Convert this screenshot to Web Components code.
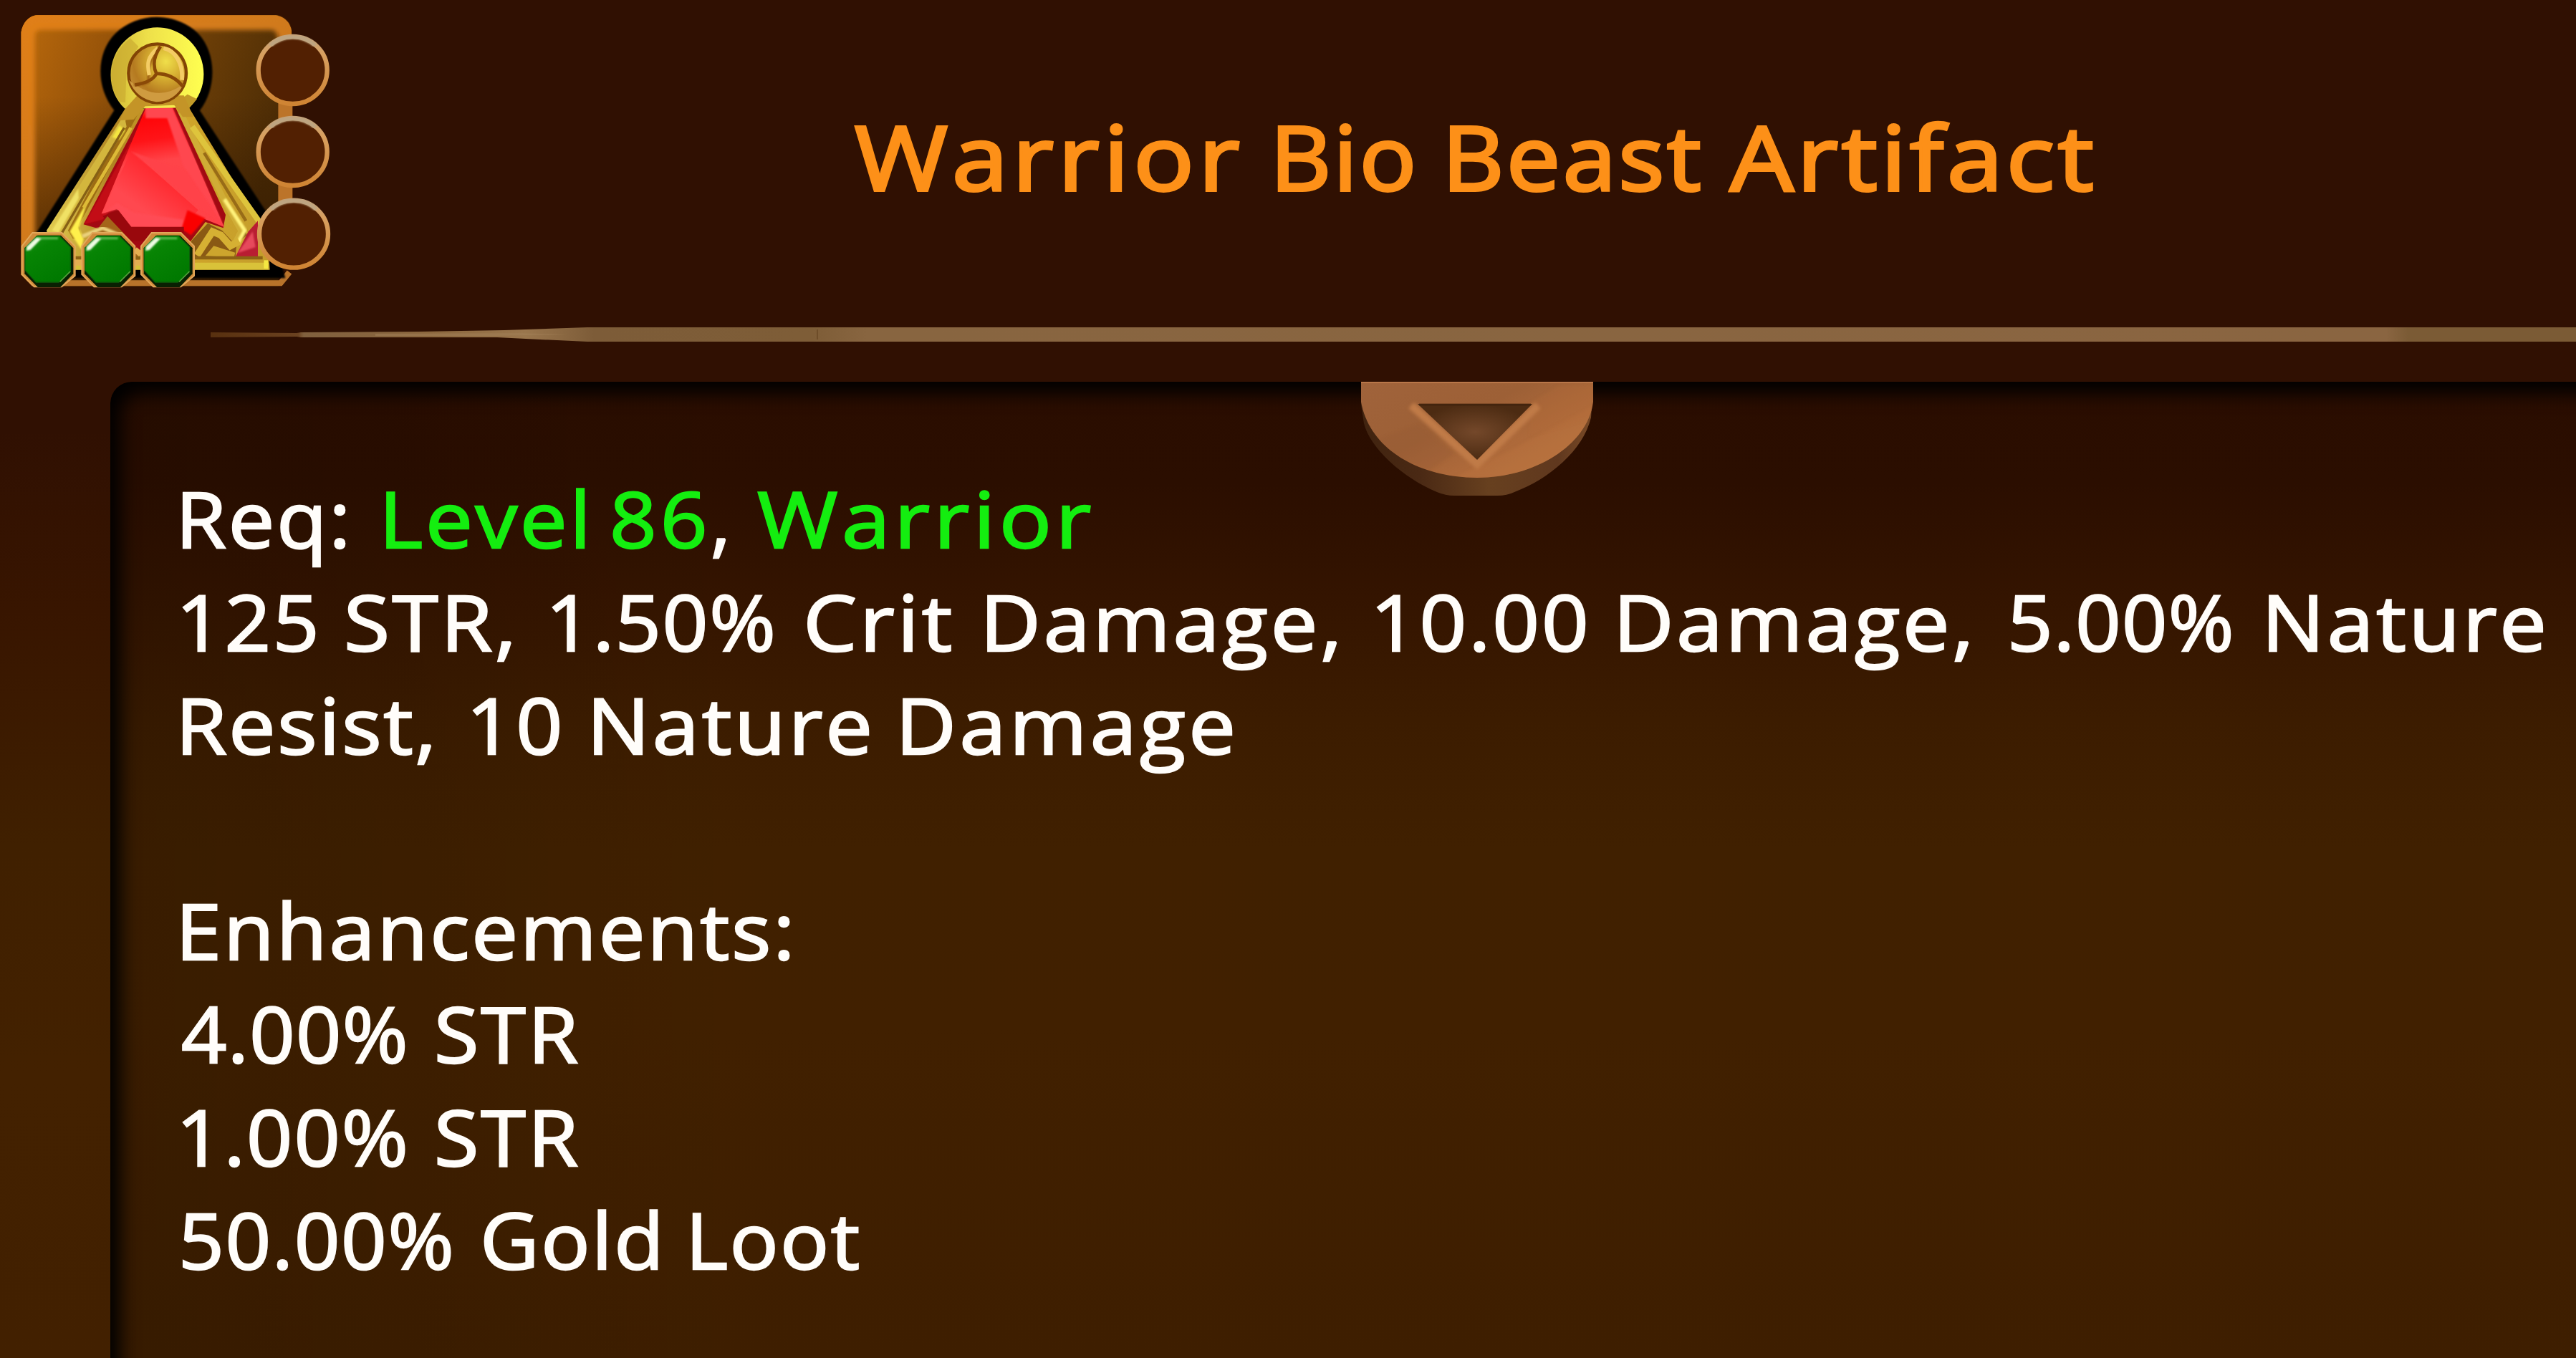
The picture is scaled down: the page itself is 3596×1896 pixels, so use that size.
<!DOCTYPE html>
<html lang="en">
<head>
<meta charset="utf-8">
<title>Warrior Bio Beast Artifact</title>
<style>
    html, body {
        margin: 0;
        width: 100%;
        height: 100%;
        overflow: hidden;
        background: #2f1002;
    }
</style>
</head>
<body>
<item-window>
    <item-header slot="header">
        <artifact-icon slot="icon"></artifact-icon>
        <fit-word ink="535" step="591">Warrior</fit-word>
        <fit-word ink="185" step="240">Bio</fit-word>
        <fit-word ink="346" step="390">Beast</fit-word>
        <fit-word ink="505" step="505">Artifact</fit-word>
    </item-header>
    <item-divider slot="header"></item-divider>
    <item-panel>
        <scroll-knob slot="knob"></scroll-knob>
        <text-line>
            <fit-word ink="226" step="284">Req:</fit-word>
            <fit-word class="met" ink="276" step="317">Level</fit-word>
            <fit-word class="met" ink="126" step="140">86</fit-word>
            <fit-word ink="16" step="62">,</fit-word>
            <fit-word class="met" ink="464" step="464">Warrior</fit-word>
        </text-line>
        <text-line>
            <fit-word ink="184" step="230">125</fit-word>
            <fit-word ink="227" step="286">STR,</fit-word>
            <fit-word ink="306" step="356">1.50%</fit-word>
            <fit-word ink="200" step="251">Crit</fit-word>
            <fit-word ink="486" step="544">Damage,</fit-word>
            <fit-word ink="290" step="340">10.00</fit-word>
            <fit-word ink="484" step="546">Damage,</fit-word>
            <fit-word ink="305" step="359">5.00%</fit-word>
            <fit-word ink="381" step="381">Nature</fit-word>
        </text-line>
        <text-line>
            <fit-word ink="345" step="405">Resist,</fit-word>
            <fit-word ink="120" step="169">10</fit-word>
            <fit-word ink="382" step="431">Nature</fit-word>
            <fit-word ink="458" step="458">Damage</fit-word>
        </text-line>
        <text-line></text-line>
        <text-line>
            <fit-word ink="846" step="846">Enhancements:</fit-word>
        </text-line>
        <text-line>
            <fit-word ink="309" step="356">4.00%</fit-word>
            <fit-word ink="194" step="194">STR</fit-word>
        </text-line>
        <text-line>
            <fit-word ink="309" step="356">1.00%</fit-word>
            <fit-word ink="194" step="194">STR</fit-word>
        </text-line>
        <text-line>
            <fit-word ink="373" step="421">50.00%</fit-word>
            <fit-word ink="241" step="291">Gold</fit-word>
            <fit-word ink="231" step="231">Loot</fit-word>
        </text-line>
    </item-panel>
</item-window>

<script>
class ShadowElement extends HTMLElement {
    constructor() {
        super();
        this.attachShadow({mode: 'open'});
        this.shadowRoot.innerHTML = this.constructor.markup;
    }
}

customElements.define('item-window', class extends ShadowElement {
    static markup = `
        <style>
            :host {
                display: flex;
                flex-direction: column;
                width: 100%;
                height: 1896px;
                overflow: hidden;
                font-family: 'Open Sans', 'Noto Sans', sans-serif;
                font-weight: 500;
                background: linear-gradient(#301002 0, #301002 600px, #381500 850px, #402000 1180px, #432100 1500px, #422000 100%);
            }
            header {
                display: flex;
                flex-direction: column;
                height: 533px;
                flex: none;
            }
        </style>
        <header><slot name="header"></slot></header>
        <slot></slot>`;
});

customElements.define('item-header', class extends ShadowElement {
    static markup = `
        <style>
            :host {
                display: grid;
                height: 457px;
                flex: none;
                color: #fd9018;
                font-size: 125px;
                line-height: 436px;
                -webkit-text-stroke: 4px #fd9018;
            }
            .icon, .title {
                grid-area: 1 / 1;
            }
            .title {
                display: flex;
                justify-content: center;
                padding-left: 518px;
            }
        </style>
        <div class="icon"><slot name="icon"></slot></div>
        <div class="title"><slot></slot></div>`;
});

customElements.define('text-line', class extends ShadowElement {
    static markup = `
        <style>
            :host {
                display: flex;
                height: 143.8px;
                flex: none;
            }
        </style>
        <slot></slot>`;
});

customElements.define('item-divider', class extends ShadowElement {
    static markup = `
        <style>
            :host {
                display: block;
                height: 20px;
                margin-left: 294px;
            }
            svg { display: block; }
        </style>
        <svg width="3302" height="20" viewBox="0 0 3302 20">
            <defs>
                <linearGradient id="bar" gradientUnits="userSpaceOnUse" x1="0" y1="0" x2="3820" y2="0">
                    <stop offset="0" stop-color="#58300f"/>
                    <stop offset=".032" stop-color="#6b4220"/>
                    <stop offset=".034" stop-color="#80603e"/>
                    <stop offset=".08" stop-color="#8c673e"/>
                    <stop offset=".115" stop-color="#9a764d"/>
                    <stop offset=".14" stop-color="#7d5c38"/>
                    <stop offset=".22" stop-color="#7e5d37"/>
                    <stop offset=".24" stop-color="#886540"/>
                    <stop offset=".795" stop-color="#8a6541"/>
                    <stop offset=".803" stop-color="#7b5b35"/>
                    <stop offset="1" stop-color="#7b5b35"/>
                </linearGradient>
            </defs>
            <path fill="url(#bar)" d="M0 7 L120 8 L126 7 L290 6 L410 4 L526 0 H3302 V20 H526 L460 17 L400 14 H126 L120 13 L0 14Z"/>
            <path fill="#a18058" d="M230 9 L430 8 L500 10 L400 12 L230 12Z" opacity=".5"/>
            <path fill="#62421f" d="M846 3 h2 v14 h-2z" opacity=".6"/>
        </svg>`;
});

customElements.define('item-panel', class extends ShadowElement {
    static markup = `
        <style>
            :host {
                display: block;
                position: relative;
                box-sizing: border-box;
                flex: 1;
                margin-left: 154px;
                padding: 119px 0 0 101px;
                border-radius: 30px 0 0 0;
                overflow: hidden;
                color: #fffdfa;
                font-size: 108px;
                line-height: 143.8px;
                -webkit-text-stroke: 2.4px currentColor;
                background: linear-gradient(#2a0d00 0, #2b0e00 140px, #341400 300px, #3c1c00 470px, #402000 650px, #412000 900px, #3e1e00 100%);
            }
            .shade {
                position: absolute;
                inset: 0 -80px -80px 0;
                border-radius: inherit;
                background: linear-gradient(90deg, rgba(0, 0, 0, 0.12), transparent 900px);
                box-shadow: inset 12px 14px 26px 2px #000;
            }
            .knob {
                position: absolute;
                top: 0;
                left: 0;
                right: 0;
                display: flex;
                justify-content: center;
                padding-left: 374px;
            }
            .text {
                position: relative;
            }
        </style>
        <div class="shade"></div>
        <div class="knob"><slot name="knob"></slot></div>
        <div class="text"><slot></slot></div>`;
});

customElements.define('scroll-knob', class extends ShadowElement {
    static markup = `
        <style>
            :host { display: block; }
            svg { display: block; }
        </style>
        <svg width="324" height="160" viewBox="0 0 324 160">
            <defs>
                <linearGradient id="face" x1="0" y1="0" x2="1" y2=".8">
                    <stop offset="0" stop-color="#a0633b"/>
                    <stop offset=".45" stop-color="#9d6036"/>
                    <stop offset=".7" stop-color="#ad693a"/>
                    <stop offset="1" stop-color="#b87340"/>
                </linearGradient>
                <linearGradient id="rim">
                    <stop offset="0" stop-color="#40230f"/>
                    <stop offset=".25" stop-color="#4a2914"/>
                    <stop offset=".55" stop-color="#67401f"/>
                    <stop offset=".85" stop-color="#60381e"/>
                    <stop offset="1" stop-color="#7b4b27"/>
                </linearGradient>
                <radialGradient id="dent">
                    <stop offset="0" stop-color="#74482a"/>
                    <stop offset="1" stop-color="#4c2b12"/>
                </radialGradient>
                <clipPath id="clip"><path d="M0 0 H324 V28 C316 90 240 134 162 134 C84 134 12 96 0 28Z"/></clipPath>
                <filter id="soft"><feGaussianBlur stdDeviation="2"/></filter>
            </defs>
            <path fill="url(#rim)" d="M0 0 H324 L321 50 C310 96 262 136 214 154 Q204 159 190 159 H130 Q118 159 106 154 C58 134 12 92 4 58 L0 32Z"/>
            <g clip-path="url(#clip)">
                <rect width="324" height="134" fill="url(#face)"/>
                <path fill="#955a34" d="M0 90 L80 60 L130 100 L95 124Z" opacity=".3" filter="url(#soft)"/>
                <path fill="#bd7541" d="M200 100 L324 34 V134 H130Z" opacity=".35" filter="url(#soft)"/>
                <path fill="#b26c3a" d="M235 30 L275 6 L324 4 V50 L235 75Z" opacity=".3" filter="url(#soft)"/>
                <rect width="324" height="2" fill="#b97749"/>
            </g>
            <path d="M70 33 L162 115 L247 33" fill="none" stroke="#c07a46" stroke-width="11" filter="url(#soft)"/>
            <path d="M79 31 H239 L162 109Z" fill="url(#dent)"/>
            <path d="M81 32 H237" stroke="#40230d" stroke-width="3" opacity=".7"/>
        </svg>`;
});

// drawn three units to the pixel
customElements.define('artifact-icon', class extends ShadowElement {
    static markup = `
        <style>
            :host { display: block; width: 500px; height: 420px; }
            svg { display: block; }
        </style>
        <svg width="500" height="420" viewBox="0 0 1500 1260">
            <defs>
                <linearGradient id="bg" x1="0" y1=".1" x2="1" y2=".45">
                    <stop offset="0" stop-color="#b8680c"/>
                    <stop offset=".3" stop-color="#985409"/>
                    <stop offset=".65" stop-color="#6a3d07"/>
                    <stop offset="1" stop-color="#4c2c05"/>
                </linearGradient>
                <linearGradient id="low" x1="0" y1="0" x2="0" y2="1">
                    <stop offset=".3" stop-color="#2c1500" stop-opacity="0"/>
                    <stop offset="1" stop-color="#2c1500" stop-opacity=".75"/>
                </linearGradient>
                <linearGradient id="edge" x1="0" y1="0" x2="1" y2="1">
                    <stop offset="0" stop-color="#e07f18"/>
                    <stop offset=".5" stop-color="#d07a1c"/>
                    <stop offset="1" stop-color="#b57022"/>
                </linearGradient>
                <linearGradient id="ring" x1="0" y1="0" x2="0" y2="1">
                    <stop offset="0" stop-color="#c4a279"/>
                    <stop offset=".25" stop-color="#d8a060"/>
                    <stop offset="1" stop-color="#cf8433"/>
                </linearGradient>
                <linearGradient id="halo">
                    <stop offset="0" stop-color="#d2b936"/>
                    <stop offset=".4" stop-color="#eee04a"/>
                    <stop offset="1" stop-color="#ffff50"/>
                </linearGradient>
                <linearGradient id="gold">
                    <stop offset="0" stop-color="#e2cd50"/>
                    <stop offset=".3" stop-color="#b08322"/>
                    <stop offset=".55" stop-color="#d2a62a"/>
                    <stop offset="1" stop-color="#c49d2b"/>
                </linearGradient>
                <radialGradient id="ball" cx=".65" cy=".3" r=".75">
                    <stop offset="0" stop-color="#f0df4a"/>
                    <stop offset=".4" stop-color="#d5ac30"/>
                    <stop offset=".75" stop-color="#b57a20"/>
                    <stop offset="1" stop-color="#c28c34"/>
                </radialGradient>
                <linearGradient id="ruby" x1="0" y1="0" x2=".15" y2="1">
                    <stop offset="0" stop-color="#ff5560"/>
                    <stop offset=".13" stop-color="#ff0508"/>
                    <stop offset=".32" stop-color="#ff1418"/>
                    <stop offset=".5" stop-color="#ff4449"/>
                    <stop offset="1" stop-color="#ff4248"/>
                </linearGradient>
                <linearGradient id="facet" x1="1" y1="0" x2=".35" y2=".7">
                    <stop offset="0" stop-color="#ff1015"/>
                    <stop offset=".4" stop-color="#ff2228"/>
                    <stop offset="1" stop-color="#ff484f"/>
                </linearGradient>
                <linearGradient id="green" x1="0" y1="0" x2=".6" y2="1">
                    <stop offset="0" stop-color="#20941b"/>
                    <stop offset=".35" stop-color="#078404"/>
                    <stop offset="1" stop-color="#007900"/>
                </linearGradient>
                <filter id="b3"><feGaussianBlur stdDeviation="3"/></filter>
                <filter id="b8"><feGaussianBlur stdDeviation="9"/></filter>
                <clipPath id="card"><path d="M150 63 H1165 Q1220 75 1222 130 V1150 L1180 1199 H135 L88 1150 V135 Q100 75 150 63Z"/></clipPath>
                <g id="socket">
                    <ellipse rx="144" ry="141" fill="#522002" stroke="url(#ring)" stroke-width="19"/>
                    <path d="M-95 -103 A140 137 0 0 1 95 -103" fill="none" stroke="#bda582" stroke-width="17" filter="url(#b3)"/>
                </g>
                <g id="gem">
                    <path d="M-67 -114 L56 -114 L111 -58 V66 L55 112 H-60 L-111 60 V-58Z" fill="#d28b39" stroke="#e2a85a" stroke-width="6"/>
                    <path d="M-45 -103 L52 -103 L104 -50 V58 L50 114 H-45 L-100 58 V-50Z" fill="#092002"/>
                    <path d="M-48 -101 H46 L92 -54 V49 L43 93 H-52 L-98 43 V-50Z" fill="url(#green)" stroke="#0b5f0a" stroke-width="4"/>
                    <path d="M-88 -51 L-46 -91 H40" fill="none" stroke="#57b54b" stroke-width="10" filter="url(#b3)"/>
                    <path d="M-93 -39 L-90 -56 L-50 -94 L-30 -89 L-76 -42Z" fill="#eefbe4" filter="url(#b3)"/>
                    <path d="M48 91 L91 48" stroke="#55a33c" stroke-width="5"/>
                </g>
            </defs>

            <g clip-path="url(#card)">
                <rect x="80" y="60" width="1085" height="1145" fill="url(#bg)"/>
                <rect x="80" y="60" width="1085" height="1145" fill="url(#low)"/>
                <path d="M118 1160 V150 Q122 98 175 97 H1140 Q1190 105 1192 170" fill="none" stroke="url(#edge)" stroke-width="56" filter="url(#b8)"/>
                <path d="M102 1180 V140 Q112 82 160 80 H1155 Q1205 90 1208 150" fill="none" stroke="url(#edge)" stroke-width="32"/>
                <path d="M100 1186 H1175 L1212 1140" fill="none" stroke="#b8732a" stroke-width="25"/>
            </g>

            <path d="M478 462 C400 365 402 220 483 140 C578 48 735 48 830 140 C908 222 908 370 837 463 L1120 895 L1195 1165 H150 L152 976Z" fill="#000" filter="url(#b3)"/>
            <path d="M524 455 L195 965 L240 1130 H1130 L1120 990 L792 452Z" fill="url(#gold)"/>
            <path d="M600 435 L330 945 L345 1000 L305 1000 L285 965 L540 480Z" fill="#9d6c13"/>
            <path d="M520 480 L215 965 L260 970 L530 530Z" fill="#d3b63d"/>
            <path d="M328 790 L215 965 L245 975 L330 830Z" fill="#f0e165" filter="url(#b3)"/>
            <path d="M368 840 L292 970 L340 1045 L350 1000 L330 955Z" fill="#fff04c" filter="url(#b3)"/>
            <path d="M470 575 L500 525 L525 545 L500 585Z" fill="#f5e640" filter="url(#b3)"/>
            <path d="M520 535 L245 1000" stroke="#866015" stroke-width="10"/>
            <path d="M548 535 L350 870" stroke="#ddba37" stroke-width="14"/>
            <path d="M735 440 L960 890 L1010 975 L985 1025 L1035 985 L890 745 L790 555Z" fill="#8f6414"/>
            <path d="M755 470 L950 860 L1010 968 L980 1025" fill="none" stroke="#d0ad36" stroke-width="24"/>
            <path d="M805 530 L1090 935" stroke="#dec43c" stroke-width="24"/>
            <path d="M855 640 L1030 925" stroke="#986c17" stroke-width="13"/>
            <path d="M940 835 L1025 965 L995 1020" fill="none" stroke="#fff27a" stroke-width="16" filter="url(#b3)"/>

            <path d="M985 1078 L1040 970 L1080 925 V1080Z" fill="#b91d32"/>
            <path d="M995 1060 L1058 970 L1070 1035Z" fill="#e6485c" filter="url(#b3)"/>

            <path d="M608 450 L350 940 L420 960 L560 1060 H760 L860 930 L935 955 L945 900 L735 450Z" fill="#a20912"/>
            <path d="M550 590 L352 940 L430 920 L480 860 L560 690Z" fill="#c30813" filter="url(#b3)"/>
            <path d="M612 450 H722 L938 950 L850 915 L780 960 L545 946 L490 875 L425 895Z" fill="url(#ruby)"/>
            <path d="M610 485 V450 H722 L938 950 L770 700 L700 495 H610Z" fill="#ff4750" filter="url(#b3)"/>
            <path d="M550 630 L830 880 L770 950 H547 L490 872 L427 895Z" fill="url(#facet)"/>
            <path d="M550 635 L780 715 L938 950 L830 865Z" fill="#ff4248" filter="url(#b3)"/>
            <path d="M427 895 L490 850 L560 890 L770 920 L765 950 H547 L490 876Z" fill="#ff4c54" filter="url(#b3)"/>
            <path d="M785 880 L860 915 L800 985 L760 960Z" fill="#fa0303" filter="url(#b3)"/>
            <path d="M430 905 L495 880 L550 950 H770 V1010 H520Z" fill="#99080d"/>
            <path d="M415 950 L450 905 L550 1010 L590 1100 H345Z" fill="#a46419"/>
            <path d="M345 990 L430 955 L500 985" fill="none" stroke="#ead07b" stroke-width="16" filter="url(#b3)"/>

            <path d="M800 1010 L870 935 L930 965 L990 1030 L985 1085 H800Z" fill="#8a5914"/>
            <path d="M825 1070 L890 970 L925 985 L965 1030 L1002 1010" fill="none" stroke="#d6b033" stroke-width="29"/>
            <path d="M860 1072 L895 1030 L985 1058 L980 1078Z" fill="#cda52d"/>
            <path d="M220 1080 H1100" stroke="#8c6214" stroke-width="14"/>
            <path d="M250 1115 H1125" stroke="#d9c239" stroke-width="29"/>
            <path d="M1105 1090 H1122 V1125 H1105Z" fill="#f4e742"/>

            <path d="M523 455 C445 385 442 248 524 170 C600 96 717 96 794 170 C873 246 873 376 793 450Z" fill="url(#halo)"/>
            <path d="M545 160 L580 195 L530 280 L525 430 L500 425 C448 350 452 232 545 160Z" fill="#c8a62e" opacity=".6"/>
            <path d="M785 395 L825 415 L793 452 L725 440Z" fill="#c39b28"/>
            <path d="M575 400 L525 455 L500 505 L560 500 L608 445 L730 440 L765 490 L810 490 L770 400Z" fill="#c49427"/>
            <ellipse cx="659" cy="307" rx="121" ry="123" fill="url(#ball)" stroke="#824405" stroke-width="13"/>
            <path d="M540 335 Q660 435 770 350 Q735 425 655 427 Q570 415 540 335Z" fill="#cf9b40"/>
            <path d="M672 194 Q615 255 622 345 Q595 355 560 355" fill="none" stroke="#9c5b12" stroke-width="9" filter="url(#b3)"/>
            <path d="M661 201 C617 239 615 265 625 315" fill="none" stroke="#f4cc64" stroke-width="16"/>
            <path d="M685 202 C735 212 767 268 762 335" fill="none" stroke="#f4cc64" stroke-width="17"/>
            <path d="M672 195 Q630 255 655 308 Q640 343 565 356 M655 308 Q726 310 765 362" fill="none" stroke="#8a4907" stroke-width="14"/>

            <path d="M1165 430 H1225 V500 H1165Z M1165 770 H1225 V845 H1165Z" fill="#bc7429"/>
            <use href="#socket" x="1226" y="294"/>
            <use href="#socket" x="1226" y="636"/>
            <use href="#socket" x="1230" y="980"/>

            <path d="M305 1100 H360 M555 1100 H610 M565 1045 L590 1065" stroke="#e6ae50" stroke-width="24"/>
            <use href="#gem" x="203" y="1089"/>
            <use href="#gem" x="454" y="1089"/>
            <use href="#gem" x="702" y="1089"/>
        </svg>`;
});

// a word stretched to its ink width, "step" is the distance to the next word
// defined last: it measures with the font size set by the elements around it
customElements.define('fit-word', class extends ShadowElement {
    static markup = `
        <style>
            :host {
                display: block;
                flex: none;
                white-space: nowrap;
            }
            :host(.met) {
                color: #14ee10;
                -webkit-text-stroke-color: #14ee10;
            }
            span {
                display: block;
                transform-origin: 0 0;
            }
        </style>
        <span><slot></slot></span>`;

    connectedCallback() {
        const style = getComputedStyle(this),
              ctx = document.createElement('canvas').getContext('2d'),
              text = this.textContent,
              target = Number(this.getAttribute('ink')),
              span = this.shadowRoot.querySelector('span');
        ctx.font = `${style.fontWeight} ${style.fontSize} ${style.fontFamily}`;
        const box = ctx.measureText(text),
              ink = box.actualBoundingBoxLeft + box.actualBoundingBoxRight;
        if (text.length > 1) {
            // share the stretch between the glyphs and the gaps
            const scale = 1 + (target / ink - 1) * 0.6,
                  spacing = (target / scale - ink) / (text.length - 1);
            span.style.transform = `scaleX(${scale})`;
            span.style.letterSpacing = `${spacing}px`;
        }
        span.style.marginLeft = `${box.actualBoundingBoxLeft}px`;
        this.style.width = `${this.getAttribute('step')}px`;
    }
});
</script>
</body>
</html>
